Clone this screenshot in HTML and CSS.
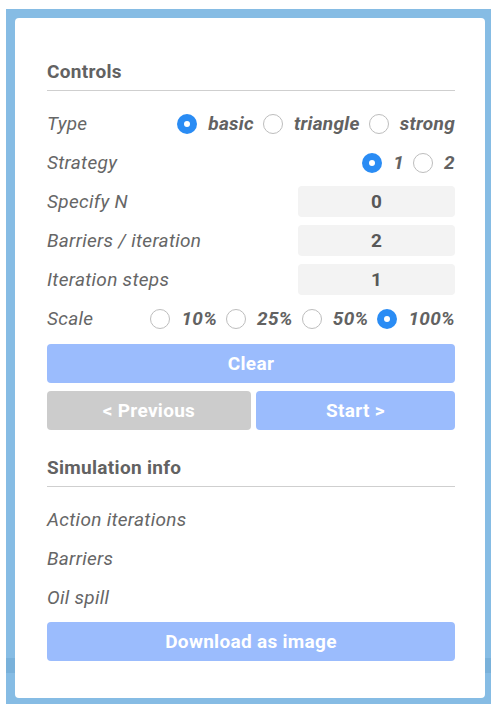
FILE: index.html
```html
<!DOCTYPE html>
<html lang="en">
<head>
<meta charset="utf-8">
<title>Controls</title>
<link rel="stylesheet" href="styles.css">
</head>
<body>
<div class="frame">
  <div class="panel">
    <h2 class="section-title">Controls</h2>
    <div class="rows">
      <div class="row">
        <span class="label">Type</span>
        <div class="choices">
          <span class="radio checked"></span><span class="choice">basic</span>
          <span class="radio"></span><span class="choice">triangle</span>
          <span class="radio"></span><span class="choice">strong</span>
        </div>
      </div>
      <div class="row">
        <span class="label">Strategy</span>
        <div class="choices">
          <span class="radio checked"></span><span class="choice">1</span>
          <span class="radio"></span><span class="choice">2</span>
        </div>
      </div>
      <div class="row">
        <span class="label">Specify N</span>
        <div class="field">0</div>
      </div>
      <div class="row">
        <span class="label">Barriers / iteration</span>
        <div class="field">2</div>
      </div>
      <div class="row">
        <span class="label">Iteration steps</span>
        <div class="field">1</div>
      </div>
      <div class="row">
        <span class="label">Scale</span>
        <div class="choices">
          <span class="radio"></span><span class="choice">10%</span>
          <span class="radio"></span><span class="choice">25%</span>
          <span class="radio"></span><span class="choice">50%</span>
          <span class="radio checked"></span><span class="choice">100%</span>
        </div>
      </div>
    </div>
    <div class="btn btn-clear">Clear</div>
    <div class="btn-pair">
      <div class="btn btn-muted">&lt; Previous</div>
      <div class="btn">Start &gt;</div>
    </div>

    <h2 class="section-title section-gap">Simulation info</h2>
    <div class="rows">
      <div class="row"><span class="label">Action iterations</span></div>
      <div class="row"><span class="label">Barriers</span></div>
      <div class="row"><span class="label">Oil spill</span></div>
    </div>
    <div class="btn btn-download">Download as image</div>
  </div>
</div>
</body>
</html>
```

FILE: styles.css
```css
html, body {
  margin: 0;
  padding: 0;
  background: #ffffff;
}

body {
  font-family: Roboto, "Liberation Sans", sans-serif;
  font-size: 19px;
  letter-spacing: 0.3px;
  color: #666666;
}

/* blue window frame around the panel */
.frame {
  margin: 9px 0 0 6px;
  padding: 9px 6px 6px 9px;
  background: linear-gradient(to bottom,
    #86bce4 0, #86bce4 649px,
    #79b1da 649px, #79b1da 664px,
    #86bce4 664px);
  height: 695px;
  box-sizing: border-box;
}

.panel {
  background: #ffffff;
  border-radius: 4px;
  height: 680px;
  box-sizing: border-box;
  padding: 42px 30px 0 32px;
  display: flex;
  flex-direction: column;
}

.section-title {
  margin: 0;
  font-size: 19px;
  line-height: 24px;
  font-weight: 700;
  color: #626262;
  padding-bottom: 6px;
  border-bottom: 1px solid #cfcfcf;
}

.section-gap {
  margin-top: 26px;
}

.rows {
  display: flex;
  flex-direction: column;
  gap: 8px;
  margin-top: 17px;
}

.row {
  display: flex;
  align-items: center;
  justify-content: space-between;
  height: 31px;
  line-height: 31px;
}

.label {
  font-style: italic;
  color: #666666;
}

.choices {
  display: flex;
  align-items: center;
}

.choice {
  font-style: italic;
  font-weight: 700;
  color: #626262;
  margin-left: 11px;
}

.radio {
  width: 20px;
  height: 20px;
  box-sizing: border-box;
  border-radius: 50%;
  border: 1px solid #bdbdbd;
  background: #ffffff;
  margin-left: 9px;
  position: relative;
}

.choices .radio:first-child {
  margin-left: 0;
}

.radio.checked {
  border: none;
  background: #2a8cf4;
}

.radio.checked::after {
  content: "";
  position: absolute;
  left: 7px;
  top: 7px;
  width: 6px;
  height: 6px;
  border-radius: 50%;
  background: #ffffff;
}

.field {
  width: 157px;
  height: 31px;
  background: #f3f3f3;
  border-radius: 4px;
  text-align: center;
  font-weight: 700;
  color: #585858;
}

.btn {
  flex: 1;
  height: 39px;
  line-height: 39px;
  border-radius: 4px;
  background: #9bbcfd;
  color: #ffffff;
  font-weight: 700;
  text-align: center;
}

.btn-clear {
  flex: none;
  margin-top: 10px;
}

.btn-pair {
  display: flex;
  gap: 5px;
  margin-top: 8px;
}

.btn-muted {
  flex: 0 0 204px;
  background: #cccccc;
}

.btn-download {
  flex: none;
  margin-top: 9px;
}
```
